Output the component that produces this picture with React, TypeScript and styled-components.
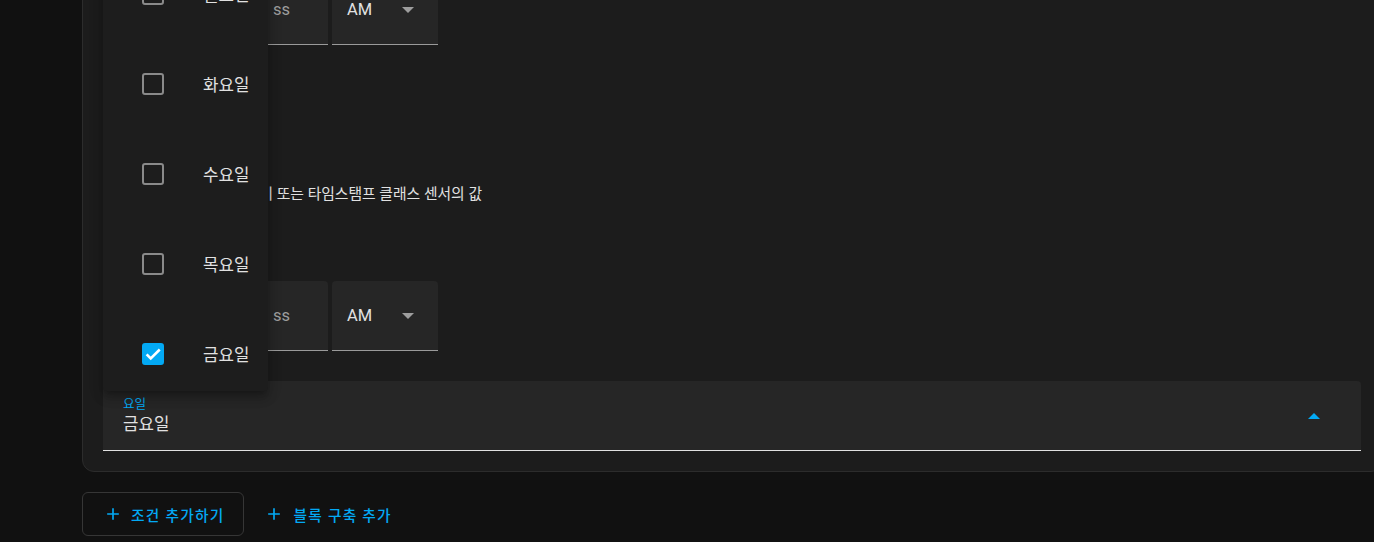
import React from 'react';
import styled, { createGlobalStyle } from 'styled-components';

const GlobalStyle = createGlobalStyle`
  html, body { margin: 0; padding: 0; background: #111111; overflow: hidden; }
  body {
    font-family: Roboto, "Noto Sans CJK KR", "Noto Sans", sans-serif;
    color: #e1e1e1;
  }
  * { box-sizing: border-box; }
`;

const Page = styled.div`
  width: 1374px;
  height: 542px;
  overflow: hidden;
  padding-left: 82px;
`;

const Scroller = styled.div`
  margin-top: -46px;
  display: flex;
  flex-direction: column;
`;

const Card = styled.div`
  position: relative;
  width: 1301px;
  border: 1px solid #2c2c2c;
  border-radius: 12px;
  background: #1c1c1c;
  padding: 20px 21px 20px 20px;
  display: flex;
  flex-direction: column;
`;

const TimeRow = styled.div<{ $mt?: number }>`
  display: flex;
  height: 70px;
  margin-top: ${(p) => p.$mt ?? 0}px;
`;

const TimeField = styled.div<{ $placeholder?: boolean }>`
  width: 69px;
  height: 100%;
  background: #262626;
  border-bottom: 1px solid #9a9a9a;
  border-radius: 4px 4px 0 0;
  display: flex;
  align-items: center;
  padding-left: 14px;
  font-size: 16.5px;
  color: ${(p) => (p.$placeholder ? '#9e9e9e' : '#e1e1e1')};
`;

const Colon = styled.div`
  width: 9px;
  display: flex;
  align-items: center;
  justify-content: center;
  font-size: 16px;
  color: #e1e1e1;
`;

const AmSelect = styled.div`
  width: 106px;
  height: 100%;
  margin-left: 4px;
  background: #262626;
  border-bottom: 1px solid #9a9a9a;
  border-radius: 4px 4px 0 0;
  display: flex;
  align-items: center;
  justify-content: space-between;
  padding: 0 24px 0 15px;
  font-size: 16.5px;
  color: #e1e1e1;
`;

const DownTriangle = styled.span`
  width: 0;
  height: 0;
  margin-top: 1px;
  border-left: 6px solid transparent;
  border-right: 6px solid transparent;
  border-top: 6px solid #9e9e9e;
`;

const SectionLabel = styled.div`
  margin-top: 24px;
  font-size: 14.7px;
  line-height: 24px;
  color: #e1e1e1;
`;

const RadioGroup = styled.div`
  margin-top: 27px;
  display: flex;
  flex-direction: column;
`;

const RadioRow = styled.div`
  height: 48px;
  display: flex;
  align-items: center;
`;

const RadioBox = styled.span`
  width: 48px;
  display: flex;
  justify-content: center;
`;

const RadioCircle = styled.span<{ $on?: boolean }>`
  width: 20px;
  height: 20px;
  border-radius: 50%;
  border: 2px solid ${(p) => (p.$on ? '#03a9f4' : '#9e9e9e')};
  display: flex;
  align-items: center;
  justify-content: center;
  &::after {
    content: '';
    width: 10px;
    height: 10px;
    border-radius: 50%;
    background: ${(p) => (p.$on ? '#03a9f4' : 'transparent')};
  }
`;

const RadioLabel = styled.span`
  margin-left: 17px;
  font-size: 14.8px;
  color: #e1e1e1;
  white-space: nowrap;
`;

const SelectField = styled.div`
  margin-top: 30px;
  height: 70px;
  background: #262626;
  border-radius: 4px 4px 0 0;
  border-bottom: 1px solid #e1e1e1;
  padding: 0 41px 0 20px;
  display: flex;
  align-items: center;
  justify-content: space-between;
`;

const SelectText = styled.div`
  display: flex;
  flex-direction: column;
`;

const FloatLabel = styled.span`
  font-size: 12.6px;
  line-height: 16px;
  color: #03a9f4;
`;

const SelectValue = styled.span`
  font-size: 16.8px;
  line-height: 24px;
  color: #e1e1e1;
`;

const UpTriangle = styled.span`
  width: 0;
  height: 0;
  border-left: 6.5px solid transparent;
  border-right: 6.5px solid transparent;
  border-bottom: 6.5px solid #03a9f4;
`;

const Menu = styled.div`
  position: absolute;
  left: 20px;
  top: -6px;
  width: 165px;
  height: 442px;
  overflow: hidden;
  background: #1d1d1d;
  border-radius: 4px;
  box-shadow: 0 5px 5px -3px rgba(0, 0, 0, 0.2), 0 8px 10px 1px rgba(0, 0, 0, 0.14),
    0 3px 14px 2px rgba(0, 0, 0, 0.12);
  z-index: 2;
`;

const MenuItem = styled.div`
  height: 90px;
  flex-shrink: 0;
  display: flex;
  align-items: center;
  padding-left: 39px;
`;

const CheckBox = styled.span<{ $checked?: boolean }>`
  width: 22px;
  height: 22px;
  border-radius: 3px;
  border: 2px solid ${(p) => (p.$checked ? '#03a9f4' : '#8a8a8a')};
  background: ${(p) => (p.$checked ? '#03a9f4' : 'transparent')};
  display: flex;
  align-items: center;
  justify-content: center;
`;

const ItemLabel = styled.span`
  margin-left: 39px;
  font-size: 16.8px;
  color: #e1e1e1;
`;

const ButtonRow = styled.div`
  margin-top: 20px;
  display: flex;
  align-items: center;
  gap: 11px;
`;

const ActionButton = styled.button<{ $outlined?: boolean }>`
  height: 44px;
  border: 1px solid ${(p) => (p.$outlined ? '#363636' : 'transparent')};
  border-radius: 6px;
  background: transparent;
  padding: ${(p) => (p.$outlined ? '0 19px 0 20px' : '0 8px')};
  display: flex;
  align-items: center;
  gap: ${(p) => (p.$outlined ? 8 : 9)}px;
  color: #03a9f4;
  font-family: Roboto, "Noto Sans CJK KR", sans-serif;
  font-size: 14.7px;
  font-weight: 500;
  letter-spacing: 1.25px;
  cursor: pointer;
`;

const PlusIcon = () => (
  <svg width="20" height="20" viewBox="0 0 24 24" fill="currentColor">
    <path d="M19 13h-6v6h-2v-6H5v-2h6V5h2v6h6v2z" />
  </svg>
);

const CheckMark = () => (
  <svg width="20" height="20" viewBox="0 0 24 24" fill="none" stroke="#ffffff" strokeWidth="3.4">
    <path d="M3.5 12.5l5.5 5.5L21 6" />
  </svg>
);

const TimeInput: React.FC<{ mt?: number }> = ({ mt }) => (
  <TimeRow $mt={mt}>
    <TimeField $placeholder>hh</TimeField>
    <Colon>:</Colon>
    <TimeField $placeholder>mm</TimeField>
    <Colon>:</Colon>
    <TimeField $placeholder>ss</TimeField>
    <AmSelect>
      AM
      <DownTriangle />
    </AmSelect>
  </TimeRow>
);

const days = ['월요일', '화요일', '수요일', '목요일', '금요일', '토요일', '일요일'];

export default function App() {
  return (
    <>
      <GlobalStyle />
      <Page>
        <Scroller>
          <Card>
            <TimeInput />
            <SectionLabel>이전</SectionLabel>
            <RadioGroup>
              <RadioRow>
                <RadioBox>
                  <RadioCircle $on />
                </RadioBox>
                <RadioLabel>고정된 시간</RadioLabel>
              </RadioRow>
              <RadioRow>
                <RadioBox>
                  <RadioCircle />
                </RadioBox>
                <RadioLabel>날짜/시간 도우미 또는 타임스탬프 클래스 센서의 값</RadioLabel>
              </RadioRow>
            </RadioGroup>
            <TimeInput mt={65} />
            <SelectField>
              <SelectText>
                <FloatLabel>요일</FloatLabel>
                <SelectValue>금요일</SelectValue>
              </SelectText>
              <UpTriangle />
            </SelectField>
            <Menu>
              {days.map((d) => (
                <MenuItem key={d}>
                  <CheckBox $checked={d === '금요일'}>{d === '금요일' && <CheckMark />}</CheckBox>
                  <ItemLabel>{d}</ItemLabel>
                </MenuItem>
              ))}
            </Menu>
          </Card>
          <ButtonRow>
            <ActionButton $outlined>
              <PlusIcon />
              조건 추가하기
            </ActionButton>
            <ActionButton>
              <PlusIcon />
              블록 구축 추가
            </ActionButton>
          </ButtonRow>
        </Scroller>
      </Page>
    </>
  );
}
